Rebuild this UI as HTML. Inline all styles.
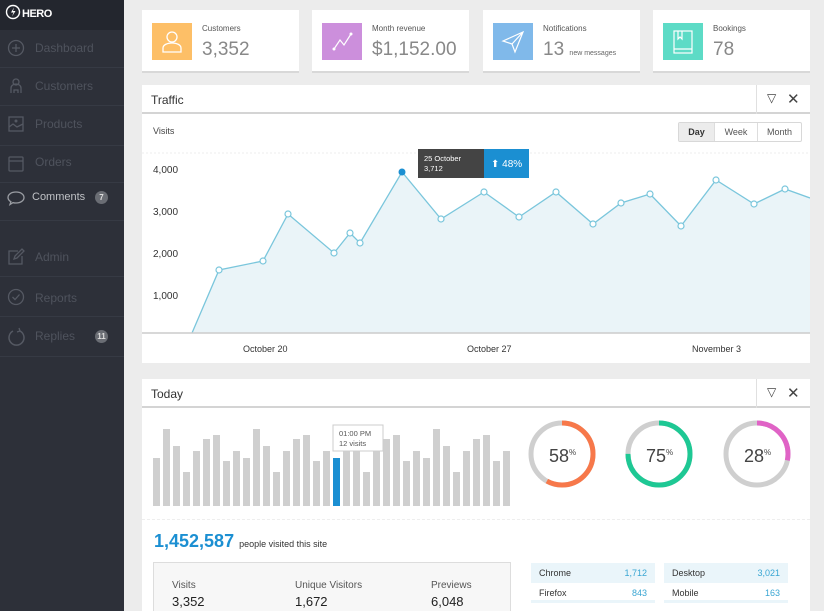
<!DOCTYPE html>
<html style="width:824px;height:611px;overflow:hidden"><head><meta charset="utf-8"><style>
*{margin:0;padding:0;box-sizing:border-box}
body{width:824px;height:611px;overflow:hidden;background:#ececec;font-family:"Liberation Sans",sans-serif;position:relative}
.a{position:absolute}
#sb{left:0;top:0;width:124px;height:611px;background:#2d3039}
#sb .hd{left:0;top:0;width:124px;height:30px;background:#23262e}
.ni{position:absolute;left:0;width:124px;height:38px;border-bottom:1px solid #363a44;color:#4f535d;font-size:12px}
.ni span{position:absolute;left:35px;top:11px}
.ni svg{position:absolute;left:6px;top:8px}
.bd{position:absolute;left:95px;top:11px;width:13px;height:13px;border-radius:7px;background:#6a6d74;color:#ddd;font-size:8px;text-align:center;line-height:13px;font-weight:bold}
.card{background:#fff;border-bottom:2px solid #d8d8d8;height:63px;top:10px;width:157px}
.ic{position:absolute;left:10px;top:13px;width:40px;height:37px}
.cl{position:absolute;left:60px;top:14px;font-size:8px;color:#555}
.cv{position:absolute;left:60px;top:29px;font-size:19px;color:#888}
.pn{background:#fff;left:142px;width:668px}
.ph{position:absolute;left:0;top:0;width:668px;height:29px;border-bottom:2px solid #d4d4d4;font-size:12px;color:#333}
.ph span{position:absolute;left:9px;top:8px}
.ph .tl{position:absolute;left:614px;top:0;width:1px;height:29px;background:#e0e0e0}
</style></head><body>
<div id="sb" class="a">
<div class="a hd"><svg class="a" style="left:5px;top:4px" width="16" height="16"><circle cx="8" cy="8" r="6.5" fill="none" stroke="#fff" stroke-width="1.4"/><path d="M9 3.5L6 8.5H8.5L7 12.5L10.5 7H8Z" fill="#fff"/></svg><span class="a" style="left:22px;top:8px;color:#fff;font-weight:bold;font-size:11px;letter-spacing:-0.5px">HERO</span></div>
<div class="ni" style="top:30px"><svg width="20" height="20"><circle cx="10" cy="10" r="7.5" fill="none" stroke="#555963" stroke-width="1.3"/><path d="M10 6v8M6 10h8" stroke="#555963" stroke-width="1.3"/></svg><span>Dashboard</span></div>
<div class="ni" style="top:68px"><svg width="20" height="20"><circle cx="10" cy="6" r="3" fill="none" stroke="#555963" stroke-width="1.3"/><path d="M5 17v-5a5 4 0 0 1 10 0v5M8 17v-3h4v3" fill="none" stroke="#555963" stroke-width="1.3"/></svg><span>Customers</span></div>
<div class="ni" style="top:106px;height:40px"><svg width="20" height="20"><rect x="3" y="3" width="14" height="14" fill="none" stroke="#555963" stroke-width="1.3"/><path d="M3 13l4-3 4 3 6-3" fill="none" stroke="#555963" stroke-width="1.3"/><circle cx="10" cy="7" r="1.5" fill="#555963"/></svg><span style="top:11px">Products</span></div>
<div class="ni" style="top:146px;height:37px"><svg width="20" height="20"><rect x="3" y="3" width="14" height="14" rx="1" fill="none" stroke="#555963" stroke-width="1.3"/><path d="M3 7h14" stroke="#555963" stroke-width="1.3"/></svg><span style="top:9px">Orders</span></div>
<div class="ni" style="top:183px;color:#bfc1c5;font-size:11px"><svg width="20" height="20" style="top:5px"><path d="M10 4c4.5 0 8 2.3 8 5.5S14.5 15 10 15c-1 0-2 0-3-.4L4 16.5l.9-2.8C3 12.7 2 11.2 2 9.5 2 6.3 5.5 4 10 4z" fill="none" stroke="#9a9da3" stroke-width="1.3"/></svg><span style="left:32px;top:8px">Comments</span><div class="bd" style="top:8px">7</div></div>
<div class="ni" style="top:221px;height:56px;border-bottom:1px solid #363a44"><svg style="top:26px" width="20" height="20"><path d="M12 4H3v13h13V9" fill="none" stroke="#555963" stroke-width="1.3"/><path d="M8 12l1-3 7-7 2 2-7 7z" fill="none" stroke="#555963" stroke-width="1.3"/></svg><span style="top:29px">Admin</span></div>
<div class="ni" style="top:277px;height:40px"><svg width="20" height="20" style="top:10px"><circle cx="10" cy="10" r="7.5" fill="none" stroke="#555963" stroke-width="1.3"/><path d="M6.5 10l2.5 2.5 4.5-5" fill="none" stroke="#555963" stroke-width="1.3"/></svg><span style="top:14px">Reports</span></div>
<div class="ni" style="top:317px;height:40px"><svg width="22" height="22" style="top:9px"><path d="M7 5A7.5 7.5 0 1 0 14 5" fill="none" stroke="#555963" stroke-width="1.5"/><path d="M13 2l1 3-3 1" fill="none" stroke="#555963" stroke-width="1.3"/></svg><span style="top:12px">Replies</span><div class="bd" style="top:13px">11</div></div>
</div>

<div class="a card" style="left:142px"><div class="ic" style="background:#fdbf67"><svg width="40" height="37"><circle cx="20" cy="14" r="5" fill="none" stroke="#fff" stroke-width="1.3"/><path d="M11 29v-4c0-3 4-5 9-5s9 2 9 5v4z" fill="none" stroke="#fff" stroke-width="1.3"/></svg></div><div class="cl">Customers</div><div class="cv">3,352</div></div>
<div class="a card" style="left:312px"><div class="ic" style="background:#cc8fdc"><svg width="40" height="37"><path d="M12 26l6-9 4 5 7-11" fill="none" stroke="#fff" stroke-width="1.2"/><circle cx="12" cy="26" r="1.5" fill="#fff"/><circle cx="29" cy="11" r="1.5" fill="#fff"/></svg></div><div class="cl">Month revenue</div><div class="cv">$1,152.00</div></div>
<div class="a card" style="left:483px"><div class="ic" style="background:#80b9ea"><svg width="40" height="37"><path d="M10 18l20-9-8 20-3-8z M19 21l11-12" fill="none" stroke="#fff" stroke-width="1.2"/></svg></div><div class="cl">Notifications</div><div class="cv">13 <span style="font-size:7px;color:#666">new messages</span></div></div>
<div class="a card" style="left:653px"><div class="ic" style="background:#5ddbc6"><svg width="40" height="37"><rect x="11" y="8" width="18" height="22" fill="none" stroke="#fff" stroke-width="1.2"/><path d="M11 26h18M15 8v8l2-2 2 2V8" fill="none" stroke="#fff" stroke-width="1.2"/></svg></div><div class="cl">Bookings</div><div class="cv">78</div></div>

<div class="a pn" style="top:85px;height:278px">
<div class="ph"><span>Traffic</span><div class="tl"></div><span style="left:625px;top:6px;font-size:12px;color:#444">▽</span><span style="left:645px;top:5px;font-size:15px;color:#444">✕</span></div>
<div class="a" style="left:11px;top:41px;font-size:9px;color:#444">Visits</div>
<div class="a" style="left:536px;top:37px;width:124px;height:20px;border:1px solid #d8d8d8;border-radius:2px;font-size:9px;color:#555;display:flex">
<div style="width:35px;background:#ececec;text-align:center;line-height:18px;font-weight:bold;color:#333">Day</div><div style="width:43px;border-left:1px solid #ddd;text-align:center;line-height:18px">Week</div><div style="flex:1;border-left:1px solid #ddd;text-align:center;line-height:18px">Month</div></div>
</div>
<svg class="a" style="left:142px;top:113px" width="668" height="250">
<line x1="0" y1="40" x2="668" y2="40" stroke="#eee" stroke-dasharray="2,2"/>
<g font-size="10" fill="#333" font-family="Liberation Sans"><text x="11" y="60">4,000</text><text x="11" y="102">3,000</text><text x="11" y="144">2,000</text><text x="11" y="186">1,000</text>
<text x="101" y="239" font-size="9">October 20</text><text x="325" y="239" font-size="9">October 27</text><text x="550" y="239" font-size="9">November 3</text></g>
<polygon fill="#eaf4f8" points="50,220 77,157 121,148 146,101 192,140 208,120 218,130 260,59 299,106 342,79 377,104 414,79 451,111 479,90 508,81 539,113 574,67 612,91 643,76 668,85 668,220"/>
<polyline fill="none" stroke="#7ac6dc" stroke-width="1.3" points="50,220 77,157 121,148 146,101 192,140 208,120 218,130 260,59 299,106 342,79 377,104 414,79 451,111 479,90 508,81 539,113 574,67 612,91 643,76 668,85"/>
<g fill="#fff" stroke="#7ac6dc" stroke-width="1.2"><circle cx="77" cy="157" r="3"/><circle cx="121" cy="148" r="3"/><circle cx="146" cy="101" r="3"/><circle cx="192" cy="140" r="3"/><circle cx="208" cy="120" r="3"/><circle cx="218" cy="130" r="3"/><circle cx="299" cy="106" r="3"/><circle cx="342" cy="79" r="3"/><circle cx="377" cy="104" r="3"/><circle cx="414" cy="79" r="3"/><circle cx="451" cy="111" r="3"/><circle cx="479" cy="90" r="3"/><circle cx="508" cy="81" r="3"/><circle cx="539" cy="113" r="3"/><circle cx="574" cy="67" r="3"/><circle cx="612" cy="91" r="3"/><circle cx="643" cy="76" r="3"/></g>
<circle cx="260" cy="59" r="3.5" fill="#1b8fd2"/>
<line x1="0" y1="220" x2="668" y2="220" stroke="#ccc" stroke-width="1.5"/>
<rect x="276" y="36" width="66" height="29" fill="#444"/><rect x="342" y="36" width="45" height="29" fill="#1b8fd2"/>
<text x="282" y="48" font-size="7.5" fill="#fff" font-family="Liberation Sans">25 October</text><text x="282" y="58" font-size="7.5" fill="#fff" font-family="Liberation Sans">3,712</text>
<text x="349" y="54" font-size="10" fill="#fff" font-family="Liberation Sans">⬆ 48%</text>
</svg>

<div class="a pn" style="top:379px;height:232px;overflow:hidden">
<div class="ph"><span>Today</span><div class="tl"></div><span style="left:625px;top:6px;font-size:12px;color:#444">▽</span><span style="left:645px;top:5px;font-size:15px;color:#444">✕</span></div>
<div class="a" style="left:0;top:140px;width:668px;border-top:1px dashed #eee"></div>
<div class="a" style="left:12px;top:152px;font-size:18px;font-weight:bold;color:#1b8fd2">1,452,587 <span style="font-size:9px;font-weight:normal;color:#333">people visited this site</span></div>
<div class="a" style="left:11px;top:183px;width:358px;height:60px;background:#f7f7f7;border:1px solid #ddd;font-size:10px;color:#555">
<span class="a" style="left:18px;top:17px">Visits</span><span class="a" style="left:141px;top:17px">Unique Visitors</span><span class="a" style="left:277px;top:17px">Previews</span>
<span class="a" style="left:18px;top:31px;font-size:13px;color:#222">3,352</span><span class="a" style="left:141px;top:31px;font-size:13px;color:#222">1,672</span><span class="a" style="left:277px;top:31px;font-size:13px;color:#222">6,048</span></div>
<div class="a" style="left:389px;top:184px;width:124px;font-size:9px;color:#333">
<div style="height:20px;background:#eaf5fa;position:relative"><span class="a" style="left:8px;top:5px">Chrome</span><span class="a" style="right:8px;top:5px;color:#3aa6d3">1,712</span></div>
<div style="height:20px;position:relative;border-bottom:3px solid #eaf5fa"><span class="a" style="left:8px;top:5px">Firefox</span><span class="a" style="right:8px;top:5px;color:#3aa6d3">843</span></div></div>
<div class="a" style="left:522px;top:184px;width:124px;font-size:9px;color:#333">
<div style="height:20px;background:#eaf5fa;position:relative"><span class="a" style="left:8px;top:5px">Desktop</span><span class="a" style="right:8px;top:5px;color:#3aa6d3">3,021</span></div>
<div style="height:20px;position:relative;border-bottom:3px solid #eaf5fa"><span class="a" style="left:8px;top:5px">Mobile</span><span class="a" style="right:8px;top:5px;color:#3aa6d3">163</span></div></div>
</div>

<svg class="a" style="left:142px;top:408px" width="668" height="100">
<g fill="#cfcfcf">
<rect x="11" y="50" width="7" height="48"/><rect x="21" y="21" width="7" height="77"/><rect x="31" y="38" width="7" height="60"/><rect x="41" y="64" width="7" height="34"/><rect x="51" y="43" width="7" height="55"/><rect x="61" y="31" width="7" height="67"/><rect x="71" y="27" width="7" height="71"/><rect x="81" y="53" width="7" height="45"/><rect x="91" y="43" width="7" height="55"/><rect x="101" y="50" width="7" height="48"/><rect x="111" y="21" width="7" height="77"/><rect x="121" y="38" width="7" height="60"/><rect x="131" y="64" width="7" height="34"/><rect x="141" y="43" width="7" height="55"/><rect x="151" y="31" width="7" height="67"/><rect x="161" y="27" width="7" height="71"/><rect x="171" y="53" width="7" height="45"/><rect x="181" y="43" width="7" height="55"/><rect x="201" y="43" width="7" height="55"/><rect x="211" y="38" width="7" height="60"/><rect x="221" y="64" width="7" height="34"/><rect x="231" y="43" width="7" height="55"/><rect x="241" y="31" width="7" height="67"/><rect x="251" y="27" width="7" height="71"/><rect x="261" y="53" width="7" height="45"/><rect x="271" y="43" width="7" height="55"/><rect x="281" y="50" width="7" height="48"/><rect x="291" y="21" width="7" height="77"/><rect x="301" y="38" width="7" height="60"/><rect x="311" y="64" width="7" height="34"/><rect x="321" y="43" width="7" height="55"/><rect x="331" y="31" width="7" height="67"/><rect x="341" y="27" width="7" height="71"/><rect x="351" y="53" width="7" height="45"/><rect x="361" y="43" width="7" height="55"/></g>
<rect x="191" y="50" width="7" height="48" fill="#1b8fd2"/>
<rect x="191" y="17" width="50" height="26" fill="#fff" stroke="#ccc"/>
<text x="197" y="28" font-size="7.5" fill="#555" font-family="Liberation Sans">01:00 PM</text><text x="197" y="38" font-size="7.5" fill="#555" font-family="Liberation Sans">12 visits</text>
<g fill="none" stroke-width="5">
<circle cx="420" cy="46" r="31" stroke="#cfcfcf"/><circle cx="420" cy="46" r="31" stroke="#f7784a" stroke-dasharray="113 200" transform="rotate(-90 420 46)"/>
<circle cx="517" cy="46" r="31" stroke="#cfcfcf"/><circle cx="517" cy="46" r="31" stroke="#1ec894" stroke-dasharray="146 200" transform="rotate(-90 517 46)"/>
<circle cx="615" cy="46" r="31" stroke="#cfcfcf"/><circle cx="615" cy="46" r="31" stroke="#e063c6" stroke-dasharray="55 200" transform="rotate(-90 615 46)"/></g>
<g font-family="Liberation Sans" fill="#444" font-size="18"><text x="407" y="54">58<tspan font-size="8" dy="-7">%</tspan></text><text x="504" y="54">75<tspan font-size="8" dy="-7">%</tspan></text><text x="602" y="54">28<tspan font-size="8" dy="-7">%</tspan></text></g>
</svg>
</body></html>
